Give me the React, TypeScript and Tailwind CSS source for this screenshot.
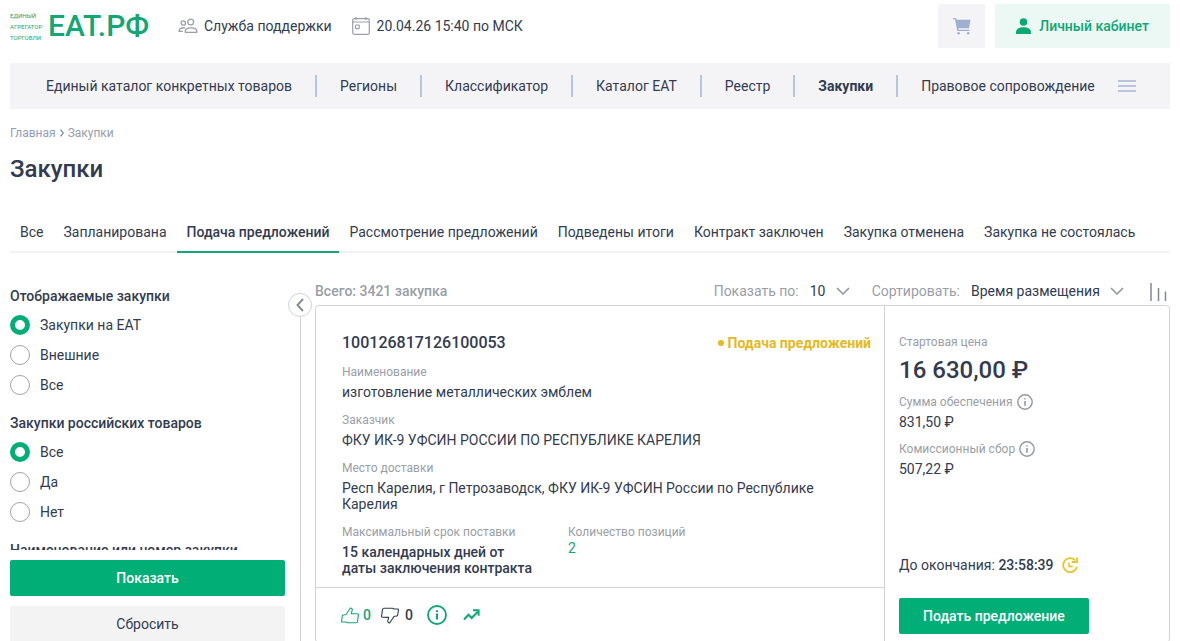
import { useState } from "react";

const NAV = [
  "Единый каталог конкретных товаров",
  "Регионы",
  "Классификатор",
  "Каталог ЕАТ",
  "Реестр",
  "Закупки",
  "Правовое сопровождение",
];

const TABS = [
  "Все",
  "Запланирована",
  "Подача предложений",
  "Рассмотрение предложений",
  "Подведены итоги",
  "Контракт заключен",
  "Закупка отменена",
  "Закупка не состоялась",
];

function Logo() {
  return (
    <a href="#" className="flex w-[138px] items-center gap-1.5 text-[#14a673]">
      <span className="w-8 text-[6px] leading-[11px]">
        ЕДИНЫЙ
        <br />
        АГРЕГАТОР
        <br />
        ТОРГОВЛИ
      </span>
      <span className="text-[30px] leading-9 font-medium">ЕАТ.РФ</span>
    </a>
  );
}

function UsersIcon() {
  return (
    <svg width="20" height="16" viewBox="0 0 20 16" fill="none" stroke="#9b9fac" strokeWidth="1.3" strokeLinejoin="round">
      <circle cx="12.7" cy="4" r="2.9" />
      <circle cx="5.3" cy="5" r="2.2" />
      <path d="M7.3 14.3v-1.2c0-2 2.2-3.3 5.7-3.3s5.8 1.3 5.8 3.3v1.2z" />
      <path d="M7 9.8c-3.6-.3-5.9 1-5.9 3v.6h3.8" />
    </svg>
  );
}

function CalendarIcon() {
  return (
    <svg width="18" height="18" viewBox="0 0 18 18" fill="none" stroke="#9b9fac" strokeWidth="1.2">
      <rect x=".7" y="1.7" width="16.6" height="15.6" rx="1.5" />
      <path d="M.7 5h16.6M4 0v3M14 0v3" />
      <rect x="3.6" y="8" width="3.6" height="3.6" rx=".5" />
    </svg>
  );
}

function CartIcon() {
  return (
    <svg width="18" height="17" viewBox="0 0 18 17" fill="#9fb0cf">
      <path d="M0 .3h3l.6 1.4H17.5L16 10.2H5.3l.4 1.5h10.6v1.4H4.3L2 1.6H0z" />
      <circle cx="5.6" cy="15.2" r="1.3" />
      <circle cx="15.2" cy="15.2" r="1.3" />
    </svg>
  );
}

function InfoIcon({ size, color }: { size: number; color: string }) {
  return (
    <svg width={size} height={size} viewBox="0 0 20 20" fill="none" stroke={color}>
      <circle cx="10" cy="10" r="9" strokeWidth="1.8" />
      <path d="M10 8.6v6M10 5.2v1.8" strokeWidth="2" />
    </svg>
  );
}

function Chevron() {
  return (
    <svg width="14" height="8" viewBox="0 0 14 8" fill="none" stroke="#8f939c" strokeWidth="1.5" className="pointer-events-none absolute right-0">
      <path d="M1 1l6 6 6-6" />
    </svg>
  );
}

function ThumbIcon({ down }: { down?: boolean }) {
  return (
    <svg
      width="18"
      height="17"
      viewBox="0 0 18 17"
      fill="none"
      stroke="currentColor"
      strokeWidth="1.1"
      strokeLinejoin="round"
      className={down ? "rotate-180" : ""}
    >
      <path d="M1.4 8.2l3.7-.7L9.3 1c1.6.2 2.3 1.2 1.8 2.6l-.8 3 6.2.2c.9.1 1 .8.9 1.4l-.9 6.3c-.1.9-.7 1.300-1.500 1.300H6.600L4.900 15H1.200c-.4 0-.7-.3-.6-.8z" />
    </svg>
  );
}

function RadioGroup({ title, name, options }: { title: string; name: string; options: string[] }) {
  const [value, setValue] = useState(options[0]);
  return (
    <fieldset>
      <legend className="mb-[9px] font-medium">{title}</legend>
      <div className="flex flex-col gap-2.5">
        {options.map((o) => (
          <label key={o} className="flex items-center gap-2.5">
            <input
              type="radio"
              name={name}
              checked={value === o}
              onChange={() => setValue(o)}
              className="h-5 w-5 appearance-none rounded-full border border-[#a3a3a3] bg-white checked:border-[5px] checked:border-[#00ae76]"
            />
            {o}
          </label>
        ))}
      </div>
    </fieldset>
  );
}

function Field({ label, children }: { label: string; children: string }) {
  return (
    <div className="mt-3 first:mt-[11px]">
      <dt className="text-xs leading-4 text-[#9a9ea6]">{label}</dt>
      <dd className="mt-1 leading-4">{children}</dd>
    </div>
  );
}

function Fee({ label, value }: { label: string; value: string }) {
  return (
    <div>
      <dt className="flex items-center gap-1 text-xs leading-4 text-[#9a9ea6]">
        {label}
        <InfoIcon size={16} color="#95989e" />
      </dt>
      <dd className="mt-1 leading-4">{value}</dd>
    </div>
  );
}

function PurchaseCard() {
  return (
    <article className="flex rounded-sm border border-[#d3d3d6]">
      <div className="flex min-w-0 flex-1 flex-col">
        <div className="pt-[27px] pr-[13px] pb-[11px] pl-[26px]">
          <div className="flex items-center justify-between leading-5">
            <a href="#" className="text-base leading-5 font-medium">100126817126100053</a>
            <span className="flex items-center gap-1 font-bold text-[#e6b91e]">
              <span className="h-1.5 w-1.5 rounded-full bg-[#e6b91e]" />
              Подача предложений
            </span>
          </div>
          <dl className="max-w-[500px]">
            <Field label="Наименование">изготовление металлических эмблем</Field>
            <Field label="Заказчик">ФКУ ИК-9 УФСИН РОССИИ ПО РЕСПУБЛИКЕ КАРЕЛИЯ</Field>
            <Field label="Место доставки">
              Респ Карелия, г Петрозаводск, ФКУ ИК-9 УФСИН России по Республике Карелия
            </Field>
            <div className="mt-3 flex gap-[26px]">
              <div className="w-[200px]">
                <dt className="text-xs leading-4 text-[#9a9ea6]">Максимальный срок поставки</dt>
                <dd className="mt-1 leading-4 font-medium">15 календарных дней от даты заключения контракта</dd>
              </div>
              <div>
                <dt className="text-xs leading-4 text-[#9a9ea6]">Количество позиций</dt>
                <dd className="leading-4 text-[#14a673]">2</dd>
              </div>
            </div>
          </dl>
        </div>
        <div className="flex flex-1 items-center border-t border-[#d3d3d6] pl-[25px] font-medium">
          <button aria-label="Нравится" className="flex items-center gap-1 text-[#14a673]">
            <ThumbIcon />0
          </button>
          <button aria-label="Не нравится" className="ml-2.5 flex items-center gap-1.5">
            <ThumbIcon down />0
          </button>
          <button aria-label="Информация" className="ml-[14px]">
            <InfoIcon size={20} color="#0aa874" />
          </button>
          <button aria-label="Динамика" className="ml-4">
            <svg width="17" height="12" viewBox="0 0 17 12" fill="none" stroke="#0aa874" strokeWidth="2">
              <path d="M1 10.5l4.5-4.7 3.200 3.200 6-6.300" />
              <path d="M10 1.200h5.600V6.800" />
            </svg>
          </button>
        </div>
      </div>

      <div className="w-[285px] border-l border-[#d3d3d6] px-[14px] pt-7 pb-2">
        <dl>
          <dt className="text-xs leading-4 text-[#9a9ea6]">Стартовая цена</dt>
          <dd className="mt-1.5 text-2xl leading-7 font-medium">16 630,00 ₽</dd>
        </dl>
        <dl className="mt-2.5 flex flex-col gap-[11px]">
          <Fee label="Сумма обеспечения" value="831,50 ₽" />
          <Fee label="Комиссионный сбор" value="507,22 ₽" />
        </dl>
        <div className="mt-20 flex items-center leading-4">
          <span>До окончания: <b className="font-medium">23:58:39</b></span>
          <svg width="16" height="16" viewBox="0 0 16 16" fill="none" stroke="#eac425" strokeWidth="1.8" className="ml-2">
            <path d="M13.2 3.3A7 7 0 1 0 15 9.6" />
            <path d="M15 .4V5H9.8" />
            <path d="M7 5.6v4h3.8" strokeWidth="1.5" />
          </svg>
        </div>
        <button className="mt-[25px] h-9 rounded-xs bg-[#00ae76] px-6 font-medium text-white">Подать предложение</button>
      </div>
    </article>
  );
}

export default function App() {
  const [tab, setTab] = useState("Подача предложений");
  const [open, setOpen] = useState(true);

  return (
    <div className="min-h-screen bg-white px-2.5 font-['Roboto','Liberation_Sans',sans-serif] text-sm leading-5 text-[#323b50]">
      <header className="flex items-start justify-between pt-1">
        <div className="flex h-11 items-center">
          <Logo />
          <a href="#" className="ml-[30px] flex items-center gap-1.5">
            <UsersIcon />
            Служба поддержки
          </a>
          <span className="ml-5 flex items-center gap-[7px]">
            <CalendarIcon />
            20.04.26 15:40 по МСК
          </span>
        </div>
        <div className="flex gap-2.5">
          <button aria-label="Корзина" className="flex h-11 w-[47px] items-center justify-center bg-[#f4f4f6]">
            <CartIcon />
          </button>
          <a href="#" className="flex h-11 items-center gap-2 bg-[#ecf8f4] px-[21px] font-medium text-[#0aa874]">
            <svg width="15" height="16" viewBox="0 0 15 16" fill="#0aa874">
              <circle cx="7.5" cy="4" r="3.8" />
              <path d="M0 16v-1.5C0 11 3 9.2 7.5 9.2S15 11 15 14.500V16z" />
            </svg>
            Личный кабинет
          </a>
        </div>
      </header>

      <nav className="mt-[15px] flex h-[46px] items-center bg-[#f4f4f6] pl-[13px]">
        {NAV.map((item, i) => (
          <div key={item} className="flex items-center whitespace-nowrap">
            {i > 0 && <span className="h-[22px] w-0.5 bg-[#b9c4de]" />}
            <a href="#" className={item === "Закупки" ? "px-[23px] font-bold" : "px-[23px]"}>{item}</a>
          </div>
        ))}
        <button aria-label="Меню" className="flex w-[18px] flex-col gap-[3px]">
          <span className="h-0.5 bg-[#b9c4de]" />
          <span className="h-0.5 bg-[#b9c4de]" />
          <span className="h-0.5 bg-[#b9c4de]" />
        </button>
      </nav>

      <div className="mt-4 flex items-center gap-1 text-xs leading-4 text-[#9a9ea6]">
        <a href="#" className="text-[#8f9dbd]">Главная</a>
        <svg width="4" height="8" viewBox="0 0 4 8" fill="none" stroke="#6f7b95" strokeWidth="1.1">
          <path d="M.5.7L3.3 4 .5 7.300" />
        </svg>
        <span>Закупки</span>
      </div>
      <h1 className="mt-3 text-2xl leading-8 font-medium">Закупки</h1>

      <div className="mt-[27px] flex border-b-2 border-[#f3f3f3]">
        {TABS.map((t) => (
          <button
            key={t}
            onClick={() => setTab(t)}
            className={`-mb-0.5 border-b-2 px-2.5 pt-2.5 pb-[9px] whitespace-nowrap ${
              tab === t ? "border-[#14a673] font-medium" : "border-transparent"
            }`}
          >
            {t}
          </button>
        ))}
      </div>

      <main className="flex pt-7">
        <div className="mt-[5px] flex w-[275px] shrink-0 flex-col">
          {/* filters scroll above the two fixed buttons */}
          <div className="flex h-[calc(100vh-377px)] flex-col gap-[18px] overflow-y-auto [scrollbar-width:none]">
            <RadioGroup title="Отображаемые закупки" name="source" options={["Закупки на ЕАТ", "Внешние", "Все"]} />
            <RadioGroup title="Закупки российских товаров" name="russian" options={["Все", "Да", "Нет"]} />
            <label htmlFor="query" className="font-medium">Наименование или номер закупки</label>
            <input id="query" className="h-9 shrink-0 border border-[#d3d3d6] px-2.5" />
          </div>
          <button className="mt-2.5 h-9 rounded-xs bg-[#00ae76] font-medium text-white">Показать</button>
          <button className="mt-2.5 h-9 rounded-xs bg-[#f3f3f4]">Сбросить</button>
        </div>

        <div className="mt-3 flex w-[30px] shrink-0 flex-col items-center">
          <button
            aria-label="Свернуть фильтры"
            onClick={() => setOpen(!open)}
            className="flex h-6 w-6 items-center justify-center rounded-full border border-[#cfd3de] bg-white"
          >
            <svg width="8" height="14" viewBox="0 0 8 14" fill="none" stroke="#8a8d94" strokeWidth="2" className={open ? "" : "rotate-180"}>
              <path d="M7 1L1.500 7 7 13" />
            </svg>
          </button>
          <span className="w-px flex-1 bg-[#d3d3d6]" />
        </div>

        <section className="min-w-0 flex-1">
          <div className="flex h-6 items-center pb-1">
            <span className="font-medium text-[#9a9ea6]">Всего: 3421 закупка</span>
            <label htmlFor="perPage" className="ml-auto text-[#9a9ea6]">Показать по:</label>
            <div className="relative ml-[11px] flex items-center">
              <select id="perPage" className="appearance-none bg-transparent pr-6">
                <option>10</option>
                <option>20</option>
                <option>50</option>
              </select>
              <Chevron />
            </div>
            <label htmlFor="sort" className="ml-[22px] text-[#9a9ea6]">Сортировать:</label>
            <div className="relative ml-[11px] flex items-center">
              <select id="sort" className="appearance-none bg-transparent pr-6">
                <option>Время размещения</option>
                <option>Цена</option>
              </select>
              <Chevron />
            </div>
            <button aria-label="Порядок сортировки" className="mr-[3px] ml-[26px] self-end">
              <svg width="17" height="18" viewBox="0 0 17 18" fill="none" stroke="#85888f" strokeWidth="1.5">
                <path d="M1 0v18M8.500 5v13M15.500 8.500v9.500" />
              </svg>
            </button>
          </div>
          <PurchaseCard />
        </section>
      </main>
    </div>
  );
}
